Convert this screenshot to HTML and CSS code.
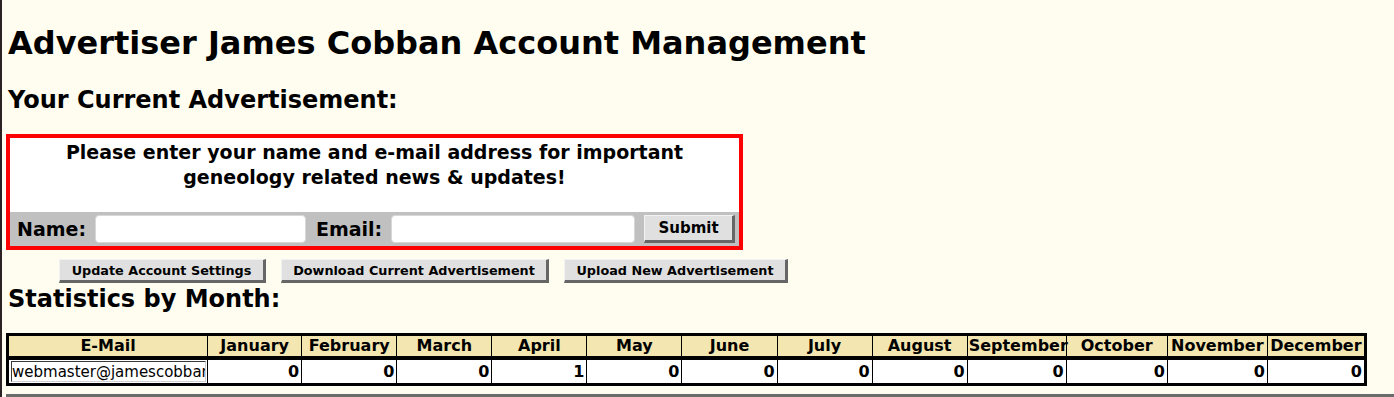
FILE: index.html
```html
<!DOCTYPE html>
<html>
<head>
<meta charset="utf-8">
<title>Advertiser Account Management</title>
<link rel="stylesheet" href="styles.css">
</head>
<body>
<div class="page">
  <h1 class="title">Advertiser James Cobban Account Management</h1>
  <h2 class="section">Your Current Advertisement:</h2>
  <div class="adbox">
    <p class="admsg">Please enter your name and e-mail address for important<br>geneology related news &amp; updates!</p>
    <div class="adform">
      <label class="adlabel">Name:</label>
      <input class="adinput name" type="text">
      <label class="adlabel email">Email:</label>
      <input class="adinput mail" type="text">
      <button class="btn submit" type="button">Submit</button>
    </div>
  </div>
  <div class="actions">
    <button class="btn act a1" type="button">Update Account Settings</button>
    <button class="btn act a2" type="button">Download Current Advertisement</button>
    <button class="btn act a3" type="button">Upload New Advertisement</button>
  </div>
  <h2 class="section stats">Statistics by Month:</h2>
  <table class="stats-table">
    <colgroup>
      <col class="c-mail"><col class="c94"><col class="c95"><col class="c95"><col class="c95"><col class="c95"><col class="c95"><col class="c95"><col class="c95"><col class="c99"><col class="c101"><col class="c100"><col class="c98">
    </colgroup>
    <thead>
      <tr>
        <th>E-Mail</th><th>January</th><th>February</th><th>March</th><th>April</th><th>May</th><th>June</th><th>July</th><th>August</th><th>September</th><th>October</th><th>November</th><th>December</th>
      </tr>
    </thead>
    <tbody>
      <tr>
        <td class="mailcell"><input class="mailinput" type="text" value="webmaster@jamescobban.net" readonly></td>
        <td>0</td><td>0</td><td>0</td><td>1</td><td>0</td><td>0</td><td>0</td><td>0</td><td>0</td><td>0</td><td>0</td><td>0</td>
      </tr>
    </tbody>
  </table>
  <div class="footerbar"></div>
</div>
</body>
</html>
```
FILE: styles.css
```css
html {
  background: #fffdf0;
}
body {
  margin: 0;
  min-height: 100vh;
  border-left: 2px solid #2b2323;
  font-family: "DejaVu Sans", sans-serif;
  color: #000;
  background: #fffdf0;
}
.page {
  padding: 0 0 0 4px;
  overflow: hidden;
}
.title {
  font-size: 32px;
  font-weight: bold;
  line-height: 37px;
  margin: 25px 0 0 2px;
}
.section {
  font-size: 24px;
  font-weight: bold;
  line-height: 28px;
  margin: 24px 0 0 2px;
}
.adbox {
  margin-top: 20px;
  width: 729px;
  border: 4px solid #ff0000;
  background: #ffffff;
}
.admsg {
  margin: 0;
  padding: 2px 0 0;
  height: 74px;
  box-sizing: border-box;
  text-align: center;
  font-size: 19px;
  font-weight: bold;
  line-height: 25px;
}
.adform {
  background: #c0c0c0;
  height: 34px;
  display: flex;
  align-items: center;
  padding: 0 4px 0 7px;
}
.adlabel {
  font-size: 19px;
  font-weight: bold;
  margin-right: 9px;
}
.adlabel.email {
  margin-left: 10px;
}
.adinput {
  height: 28px;
  box-sizing: border-box;
  border: 1px solid #d8d8d8;
  border-radius: 4px;
  background: #fff;
  padding: 0 4px;
}
.adinput.name {
  width: 211px;
}
.adinput.mail {
  width: 244px;
}
.btn {
  font-family: "DejaVu Sans", sans-serif;
  font-weight: bold;
  background: #e0e0e0;
  color: #000;
  border-style: solid;
  border-color: #f2f2f2 #666666 #666666 #f2f2f2;
  border-width: 1px 3px 3px 1px;
  padding: 0;
  box-sizing: border-box;
}
.submit {
  margin-left: 9px;
  width: 91px;
  height: 28px;
  font-size: 15px;
}
.actions {
  display: flex;
  margin: 9px 0 0 53px;
  gap: 15px;
}
.act {
  height: 24px;
  font-size: 12.8px;
}
.a1 { width: 207px; }
.a2 { width: 268px; }
.a3 { width: 224px; }
.section.stats {
  margin-top: 2px;
}
.stats-table {
  margin-top: 20px;
  border-collapse: collapse;
  table-layout: fixed;
  width: 1361px;
  border: 3px solid #000;
  font-size: 16px;
}
.c-mail { width: 200px; }
.c94 { width: 94px; }
.c95 { width: 95px; }
.c99 { width: 99px; }
.c100 { width: 100px; }
.c101 { width: 101px; }
.c98 { width: 98px; }
.stats-table th {
  background: #f4e6b0;
  font-weight: bold;
  text-align: center;
  border: 1px solid #000;
  border-bottom: 4px solid #000;
  height: 20px;
  padding: 0 1px;
  white-space: nowrap;
  line-height: 20px;
}
.stats-table td {
  background: #ffffff;
  font-weight: bold;
  text-align: right;
  border: 1px solid #000;
  height: 23px;
  padding: 0 2px;
  line-height: 23px;
}
.stats-table td.mailcell {
  text-align: left;
  padding: 0 2px;
}
.mailinput {
  width: 195px;
  height: 21px;
  box-sizing: border-box;
  font-family: "DejaVu Sans", sans-serif;
  font-size: 15px;
  border-style: solid;
  border-width: 1px;
  border-color: #3a3a3a #d0d0d0 #d0d0d0 #3a3a3a;
  padding: 0;
  background: #fff;
  display: block;
}
.footerbar {
  margin-top: 8px;
  height: 12px;
  background: #6c6c6c;
}
```
